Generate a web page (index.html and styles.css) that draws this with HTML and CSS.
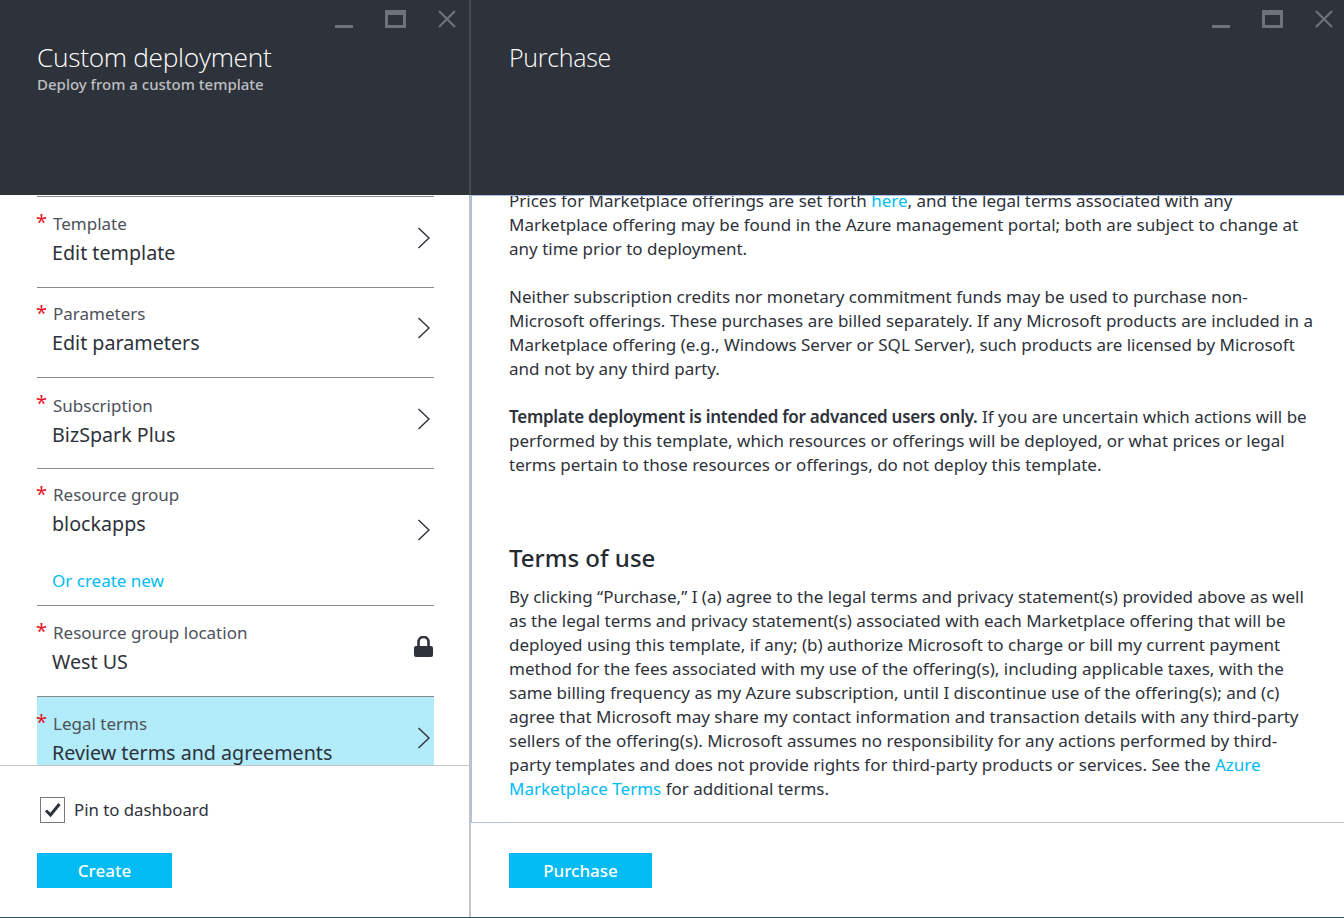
FILE: index.html
```html
<!DOCTYPE html>
<html lang="en">
<head>
    <meta charset="UTF-8">
    <title>Custom deployment</title>
    <link rel="stylesheet" href="styles.css">
</head>
<body>
    <div class="portal">
        <section class="blade blade-left">
            <header class="blade-header">
                <div class="window-controls">
                    <span class="ctl-min"></span>
                    <span class="ctl-max"></span>
                    <svg class="ctl-close" width="18" height="18" viewBox="0 0 18 18"><path d="M1 1L17 17M17 1L1 17" stroke="#6e7279" stroke-width="2.2" fill="none"/></svg>
                </div>
                <h1>Custom deployment</h1>
                <p class="subtitle">Deploy from a custom template</p>
            </header>
            <div class="blade-body">
                <div class="list">
                    <div class="row row-template">
                        <div class="row-text">
                            <div class="row-label"><span class="star">*</span>Template</div>
                            <div class="row-value">Edit template</div>
                        </div>
                        <svg class="chevron" width="14" height="22" viewBox="0 0 14 22"><path d="M1.5 1L12 11L1.5 21" stroke="#2e323a" stroke-width="1.4" fill="none"/></svg>
                    </div>
                    <div class="row row-params">
                        <div class="row-text">
                            <div class="row-label"><span class="star">*</span>Parameters</div>
                            <div class="row-value">Edit parameters</div>
                        </div>
                        <svg class="chevron" width="14" height="22" viewBox="0 0 14 22"><path d="M1.5 1L12 11L1.5 21" stroke="#2e323a" stroke-width="1.4" fill="none"/></svg>
                    </div>
                    <div class="row row-sub">
                        <div class="row-text">
                            <div class="row-label"><span class="star">*</span>Subscription</div>
                            <div class="row-value">BizSpark Plus</div>
                        </div>
                        <svg class="chevron" width="14" height="22" viewBox="0 0 14 22"><path d="M1.5 1L12 11L1.5 21" stroke="#2e323a" stroke-width="1.4" fill="none"/></svg>
                    </div>
                    <div class="row row-group">
                        <div class="row-text">
                            <div class="row-label"><span class="star">*</span>Resource group</div>
                            <div class="row-value">blockapps</div>
                            <a class="row-link" href="#">Or create new</a>
                        </div>
                        <svg class="chevron" width="14" height="22" viewBox="0 0 14 22"><path d="M1.5 1L12 11L1.5 21" stroke="#2e323a" stroke-width="1.4" fill="none"/></svg>
                    </div>
                    <div class="row row-location">
                        <div class="row-text">
                            <div class="row-label"><span class="star">*</span>Resource group location</div>
                            <div class="row-value">West US</div>
                        </div>
                        <svg class="lock" width="19" height="21" viewBox="0 0 19 21"><path d="M4.5 11V6a5 5 0 0 1 10 0V11" stroke="#2e323a" stroke-width="2.6" fill="none"/><rect x="0" y="10" width="19" height="11" rx="2" fill="#2e323a"/></svg>
                    </div>
                    <div class="row row-legal">
                        <div class="row-text">
                            <div class="row-label"><span class="star">*</span>Legal terms</div>
                            <div class="row-value">Review terms and agreements</div>
                        </div>
                        <svg class="chevron" width="14" height="22" viewBox="0 0 14 22"><path d="M1.5 1L12 11L1.5 21" stroke="#2e323a" stroke-width="1.4" fill="none"/></svg>
                    </div>
                </div>
            </div>
            <footer class="blade-footer footer-left">
                <label class="pin">
                    <span class="checkbox">
                        <svg width="18" height="16" viewBox="0 0 18 16"><path d="M2 8.5L6.5 13L15.5 2" stroke="#2e323a" stroke-width="3" fill="none"/></svg>
                    </span>
                    Pin to dashboard
                </label>
                <button class="btn btn-create">Create</button>
            </footer>
        </section>

        <section class="blade blade-right">
            <header class="blade-header">
                <div class="window-controls">
                    <span class="ctl-min"></span>
                    <span class="ctl-max"></span>
                    <svg class="ctl-close" width="18" height="18" viewBox="0 0 18 18"><path d="M1 1L17 17M17 1L1 17" stroke="#6e7279" stroke-width="2.2" fill="none"/></svg>
                </div>
                <h1 class="title-plain">Purchase</h1>
            </header>
            <div class="blade-body">
                <div class="terms">
                    <p>Prices for Marketplace offerings are set forth <a href="#">here</a>, and the legal terms associated with any<br>Marketplace offering may be found in the Azure management portal; both are subject to change at<br>any time prior to deployment.</p>
                    <p>Neither subscription credits nor monetary commitment funds may be used to purchase non-<br>Microsoft offerings. These purchases are billed separately. If any Microsoft products are included in a<br>Marketplace offering (e.g., Windows Server or SQL Server), such products are licensed by Microsoft<br>and not by any third party.</p>
                    <p><strong>Template deployment is intended for advanced users only.</strong> If you are uncertain which actions will be<br>performed by this template, which resources or offerings will be deployed, or what prices or legal<br>terms pertain to those resources or offerings, do not deploy this template.</p>
                    <h2>Terms of use</h2>
                    <p>By clicking “Purchase,” I (a) agree to the legal terms and privacy statement(s) provided above as well<br>as the legal terms and privacy statement(s) associated with each Marketplace offering that will be<br>deployed using this template, if any; (b) authorize Microsoft to charge or bill my current payment<br>method for the fees associated with my use of the offering(s), including applicable taxes, with the<br>same billing frequency as my Azure subscription, until I discontinue use of the offering(s); and (c)<br>agree that Microsoft may share my contact information and transaction details with any third-party<br>sellers of the offering(s). Microsoft assumes no responsibility for any actions performed by third-<br>party templates and does not provide rights for third-party products or services. See the <a href="#">Azure<br>Marketplace Terms</a> for additional terms.</p>
                </div>
            </div>
            <footer class="blade-footer footer-right">
                <button class="btn btn-purchase">Purchase</button>
            </footer>
        </section>
    </div>
</body>
</html>
```

FILE: styles.css
```css
* {
    box-sizing: border-box;
}
body {
    margin: 0;
    background-color: #fff;
    font-family: "Noto Sans", "Open Sans", sans-serif;
    color: #2e323a;
    overflow: hidden;
}
.portal {
    display: flex;
    height: 918px;
    border-bottom: 1px solid #27566e;
}
.blade {
    display: flex;
    flex-direction: column;
    height: 100%;
}
.blade-left {
    width: 469px;
    flex: none;
}
.blade-right {
    flex: 1;
    min-width: 0;
    border-left: 2px solid #c4c4c4;
}
.blade-header {
    position: relative;
    height: 195px;
    flex: none;
    background-color: #2e323a;
    padding: 40px 0 0 37px;
    color: #fff;
}
.blade-right .blade-header {
    margin-left: -2px;
    padding-left: 38px;
    border-left: 2px solid #474b54;
}
.window-controls {
    position: absolute;
    top: 10px;
    right: 13px;
    display: flex;
    align-items: flex-end;
    gap: 32px;
}
.blade-right .window-controls {
    right: 11px;
}
.ctl-min {
    width: 18px;
    height: 3px;
    background-color: #6e7279;
}
.ctl-max {
    width: 21px;
    height: 18px;
    border: 3px solid #6e7279;
    border-top-width: 5px;
}
.ctl-close {
    display: block;
}
h1 {
    margin: 0;
    font-size: 26.3px;
    font-weight: 300;
    line-height: 34px;
    font-family: "Open Sans", sans-serif;
    letter-spacing: -0.3px;
}
.title-plain {
    font-size: 25px;
    letter-spacing: -0.3px;
}
.subtitle {
    margin: 1px 0 0;
    font-size: 15px;
    line-height: 19px;
    font-weight: 500;
    color: #bdbfc2;
}
.blade-body {
    flex: 1;
    min-height: 0;
    overflow: hidden;
}
.blade-right .blade-body {
    border-left: 1px solid #a9c0ea;
    border-top: 1px solid #a9c0ea;
}
.list {
    margin: 1px 35px 0 37px;
}
.row {
    position: relative;
    display: flex;
    justify-content: space-between;
    align-items: flex-start;
    border-top: 1px solid #8a8a8a;
    padding-left: 16px;
}
.row-template { height: 91px; }
.row-params { height: 90px; }
.row-sub { height: 91px; }
.row-group { height: 137px; }
.row-location { height: 91px; }
.row-legal {
    height: 69px;
    background-color: #b2ebfa;
}
.row-text {
    padding-top: 16px;
}
.row-params .row-text,
.row-group .row-text {
    padding-top: 15px;
}
.row-sub .row-text {
    padding-top: 17px;
}
.star {
    position: absolute;
    left: -1px;
    top: 10px;
    font-size: 20px;
    line-height: 30px;
    color: #e81123;
}
.row-label {
    font-size: 17px;
    line-height: 22px;
    color: #4d5159;
}
.row-value {
    margin: 4px 0 0 -1px;
    font-size: 19.7px;
    line-height: 27px;
    color: #2e323a;
}
.row-link {
    display: block;
    margin: 33px 0 0 -1px;
    font-size: 17px;
    line-height: 22px;
    color: #00bcf2;
    text-decoration: none;
}
.chevron {
    margin: 30px 3px 0 0;
}
.row-params .chevron {
    margin-top: 29px;
}
.row-group .chevron {
    margin-top: 50px;
}
.row-legal .chevron {
    margin-top: 30px;
}
.lock {
    margin: 30px 1px 0 0;
}
.blade-footer {
    flex: none;
    border-top: 1px solid #c4c4c4;
}
.footer-left {
    height: 152px;
    padding: 31px 0 0 37px;
}
.footer-right {
    position: relative;
    height: 95px;
    padding-top: 30px;
    padding-left: 38px;
}
.footer-right::before {
    content: "";
    position: absolute;
    top: -1px;
    left: 0;
    width: 38px;
    height: 1px;
    background-color: #a9c0ea;
}
.pin {
    display: flex;
    align-items: center;
    gap: 9px;
    margin-left: 3px;
    font-size: 16.8px;
    line-height: 26px;
    color: #2e323a;
}
.checkbox {
    width: 25px;
    height: 26px;
    display: flex;
    align-items: center;
    justify-content: center;
    border: 1px solid #77797e;
}
.btn {
    display: block;
    height: 35px;
    border: none;
    background-color: #00bcf2;
    color: #fff;
    font-family: "Noto Sans", sans-serif;
    font-size: 17px;
    font-weight: 500;
}
.btn-create {
    width: 135px;
    margin-top: 30px;
}
.btn-purchase {
    width: 143px;
}
.terms {
    margin-top: -7px;
    padding-left: 37px;
    font-size: 17px;
    line-height: 24px;
    white-space: nowrap;
}
.terms p {
    margin: 0 0 24px;
}
.terms a {
    color: #00bcf2;
    text-decoration: none;
}
.terms strong {
    font-weight: 600;
    letter-spacing: -0.27px;
}
.terms h2 {
    margin: 64px 0 0;
    font-size: 24px;
    font-weight: 500;
    line-height: 34px;
    color: #262a31;
}
.terms h2 + p {
    margin-top: 10px;
}
```
